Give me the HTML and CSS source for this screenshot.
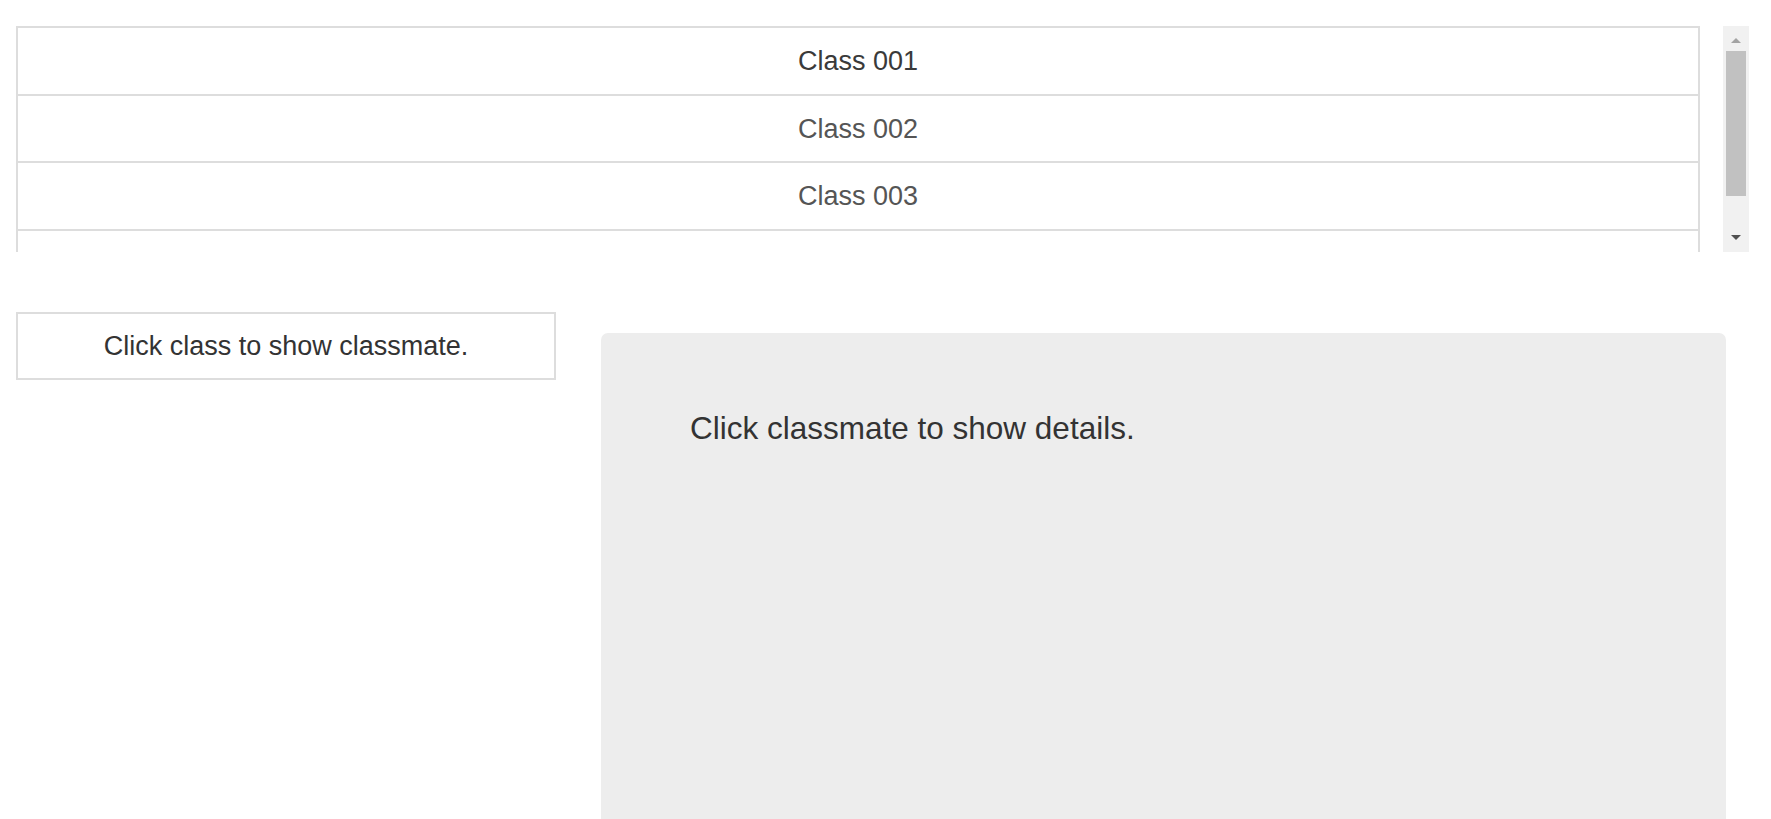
FILE: index.html
```html
<!DOCTYPE html>
<html lang="en">
<head>
<meta charset="utf-8">
<title>Classes</title>
<link rel="stylesheet" href="styles.css">
</head>
<body>
  <div class="top">
    <div class="class-list">
      <div class="class-item is-active">Class 001</div>
      <div class="class-item">Class 002</div>
      <div class="class-item">Class 003</div>
      <div class="class-item"></div>
    </div>
    <div class="scrollbar">
      <div class="sb-btn"><span class="tri-up"></span></div>
      <div class="sb-track"><div class="sb-thumb"></div></div>
      <div class="sb-btn"><span class="tri-down"></span></div>
    </div>
  </div>
  <div class="bottom">
    <div class="mates">
      <div class="mate-item">Click class to show classmate.</div>
    </div>
    <div class="details">
      <p class="details-text">Click classmate to show details.</p>
    </div>
  </div>
</body>
</html>
```
FILE: styles.css
```css
html, body {
  margin: 0;
  padding: 0;
  background: #ffffff;
}
body {
  font-family: "Liberation Sans", Arial, sans-serif;
  color: #333333;
  overflow: hidden;
}
.top {
  display: flex;
  gap: 23px;
  padding: 26px 22px 0 16px;
}
.class-list {
  flex: 1;
  height: 226px;
  overflow: hidden;
}
.class-item {
  box-sizing: border-box;
  height: 67.5px;
  padding-top: 2px;
  border: 2px solid #dddddd;
  border-bottom: none;
  display: flex;
  align-items: center;
  justify-content: center;
  font-size: 27px;
  color: #555555;
  background: #ffffff;
}
.class-item.is-active {
  color: #3a3a3a;
}
.scrollbar {
  width: 26px;
  height: 226px;
  background: #f1f1f1;
  display: flex;
  flex-direction: column;
}
.sb-btn {
  height: 25px;
  display: flex;
  align-items: center;
  justify-content: center;
}
.sb-track {
  flex: 1;
  padding: 0 3px;
}
.sb-thumb {
  height: 145px;
  background: #c1c1c1;
}
.tri-up {
  width: 0;
  height: 0;
  border-left: 5.5px solid transparent;
  border-right: 5.5px solid transparent;
  border-bottom: 5px solid #a3a3a3;
  margin-top: 4px;
}
.tri-down {
  width: 0;
  height: 0;
  border-left: 5px solid transparent;
  border-right: 5px solid transparent;
  border-top: 5px solid #505050;
  margin-top: -4px;
}
.bottom {
  display: flex;
  align-items: flex-start;
  gap: 45px;
  padding: 60px 45px 0 16px;
}
.mates {
  width: 540px;
  flex: none;
}
.mate-item {
  box-sizing: border-box;
  height: 68px;
  border: 2px solid #dddddd;
  display: flex;
  align-items: center;
  justify-content: center;
  font-size: 27px;
  color: #333333;
}
.details {
  flex: 1;
  margin-top: 21px;
  height: 620px;
  background: #ededed;
  border-radius: 7px 7px 0 0;
  padding: 78px 88px 0 89px;
  box-sizing: border-box;
}
.details-text {
  margin: 0;
  font-size: 31.5px;
  line-height: 35px;
  color: #333333;
}
```
